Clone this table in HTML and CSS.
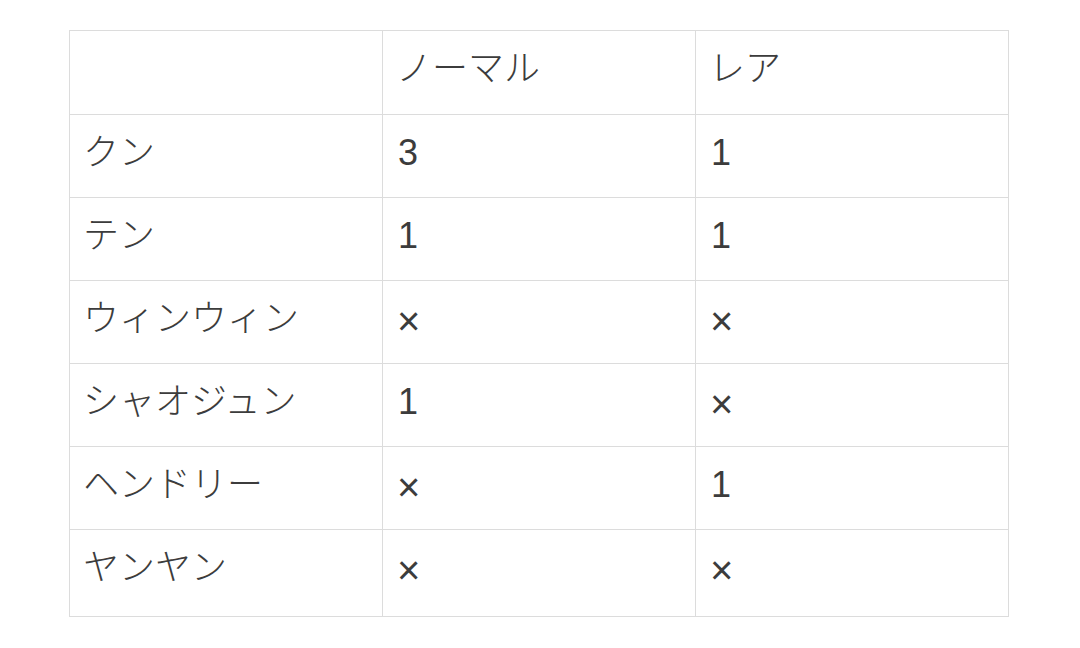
FILE: index.html
```html
<!DOCTYPE html>
<html lang="ja">
<head>
<meta charset="utf-8">
<link rel="stylesheet" href="styles.css">
</head>
<body>
<table class="grid">
  <tr class="first"><td></td><td class="ja">ノーマル</td><td class="ja">レア</td></tr>
  <tr><td class="ja">クン</td><td>3</td><td>1</td></tr>
  <tr><td class="ja">テン</td><td>1</td><td>1</td></tr>
  <tr><td class="ja">ウィンウィン</td><td><span class="x">×</span></td><td><span class="x">×</span></td></tr>
  <tr><td class="ja">シャオジュン</td><td>1</td><td><span class="x">×</span></td></tr>
  <tr><td class="ja">ヘンドリー</td><td><span class="x">×</span></td><td>1</td></tr>
  <tr class="last"><td class="ja">ヤンヤン</td><td><span class="x">×</span></td><td><span class="x">×</span></td></tr>
</table>
</body>
</html>
```
FILE: styles.css
```css
html, body {
  margin: 0;
  background: #ffffff;
}
body {
  padding: 30px 0 0 69px;
}
.grid {
  border-collapse: collapse;
  table-layout: fixed;
  width: 937px;
  font-family: "Liberation Sans", "Noto Sans CJK JP", sans-serif;
  font-size: 36px;
  font-weight: 300;
  color: #3c3c3c;
}
.grid td {
  width: 313px;
  height: 83px;
  border: 1px solid #dcdcdc;
  padding: 0 15px 6px 15px;
  box-sizing: border-box;
  vertical-align: middle;
  line-height: 1;
  white-space: nowrap;
}
.grid td.ja {
  padding-left: 13px;
}
.grid tr.first td {
  height: 84px;
  padding-bottom: 8px;
}
.grid tr.last td {
  height: 87px;
  padding-bottom: 10px;
}
.x {
  font-size: 40px;
  display: inline-block;
  margin-left: -1px;
  position: relative;
  top: 2px;
}
```
